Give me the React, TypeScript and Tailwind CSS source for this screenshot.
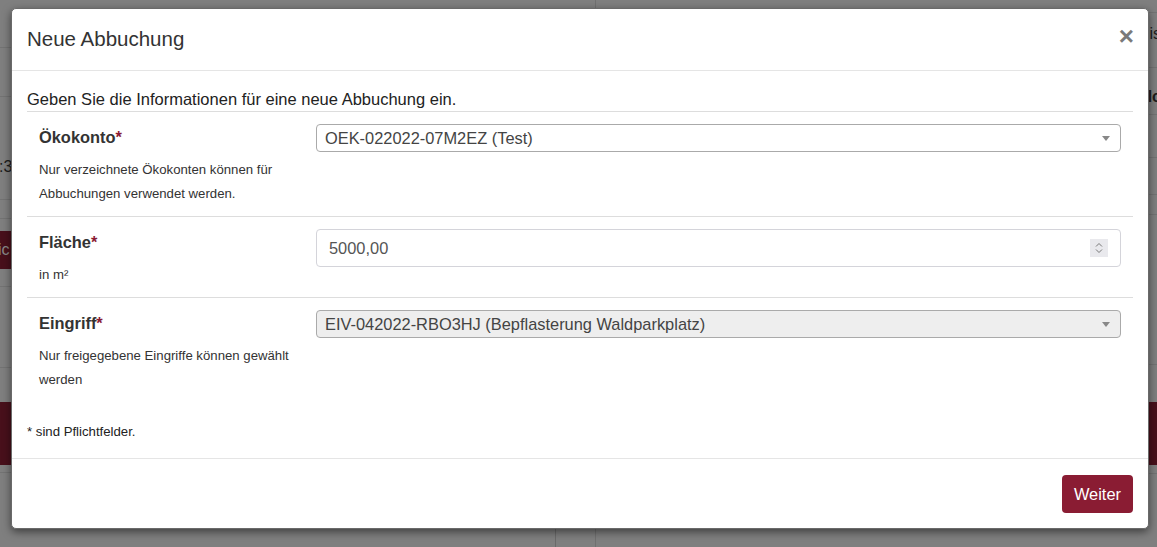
import React from "react";

function Caret() {
  return (
    <svg width="8" height="5" viewBox="0 0 8 5" className="shrink-0">
      <path d="M0 0 L8 0 L4 5 Z" fill="#888" />
    </svg>
  );
}

function Row({
  label,
  help,
  children,
  inputPad,
}: {
  label: string;
  help: React.ReactNode;
  children: React.ReactNode;
  inputPad: string;
}) {
  return (
    <div className="flex border-t border-[#dddddd]">
      <div className="w-[277px] shrink-0 px-[12px] pt-[13px] pb-[10px]">
        <div className="text-[16.4px] leading-[24px] font-bold text-[#333]">
          {label}
          <span className="text-[#8a1b34]">*</span>
        </div>
        <div className="mt-[9px] text-[13.2px] leading-[24px] text-[#333]">{help}</div>
      </div>
      <div className={"flex-1 px-[12px] " + inputPad}>{children}</div>
    </div>
  );
}

export default function App() {
  const font = { fontFamily: '"Liberation Sans", Arial, sans-serif' };
  return (
    <div className="relative w-[1157px] h-[547px] overflow-hidden bg-[#7f7f7f]" style={font}>
      {/* background page (dimmed) */}
      <div className="flex h-full">
        <div className="w-[596px] border-r border-[#707070] flex flex-col">
          <div className="h-[48px] border-b border-[#737373]" />
          <div className="h-[49px] border-b border-[#737373]" />
          <div className="h-[103px] border-b border-[#737373] flex items-end pb-[20px] text-[16px] text-[#1c1c1c]">
            <span className="-ml-[1px]">:3</span>
          </div>
          <div className="h-[19px] border-b border-[#737373]" />
          <div className="h-[68px] border-b border-[#737373] pt-[12px]">
            <div className="h-[38px] w-[120px] bg-[#48101b] text-[#8a8a8a] text-[16px] leading-[38px] -ml-[2px]">
              ic
            </div>
          </div>
          <div className="h-[81px] border-b border-[#737373]" />
          <div className="h-[34px]" />
          <div className="h-[63px] bg-[#48101b] w-[200px]" />
          <div className="h-[8px] border-b border-[#737373]" />
          <div className="flex-1 flex">
            <div className="w-[556px] border-r border-[#6a6a6a]" />
          </div>
        </div>
        <div className="flex-1 flex flex-col">
          <div className="h-[13px] border-b border-[#737373]" />
          <div className="h-[55px] border-b border-[#737373] flex items-start pt-[9px] justify-end text-[16px] text-[#1c1c1c]">
            <span className="-mr-[4px]">is</span>
          </div>
          <div className="h-[47px] border-b border-[#737373] flex items-start pt-[17px] justify-end text-[16px] font-bold text-[#1c1c1c]">
            <span className="-mr-[4px]">lc</span>
          </div>
          <div className="h-[43px] border-b border-[#737373]" />
          <div className="h-[37px] border-b border-[#737373]" />
          <div className="h-[20px] border-b border-[#737373]" />
          <div className="h-[150px] border-b border-[#737373]" />
          <div className="h-[37px]" />
          <div className="h-[63px] bg-[#48101b]" />
          <div className="h-[9px] border-b border-[#737373]" />
        </div>
      </div>

      {/* modal */}
      <div className="absolute left-[11px] top-[8px] w-[1138px] h-[521px] bg-white rounded-[5px] border border-[#6a6a6a] shadow-[0_3px_9px_rgba(0,0,0,0.5)] flex flex-col">
        <div className="h-[62px] border-b border-[#e5e5e5] flex items-center justify-between px-[15px]">
          <div className="text-[20.5px] leading-[30px] text-[#333] -mt-[2px]">Neue Abbuchung</div>
          <div className="text-[26px] leading-[26px] font-bold text-[#7a7a7a] -mr-[1px] -mt-[8px]">×</div>
        </div>
        <div className="px-[15px] pt-[16px] flex-1">
          <div className="text-[16.5px] leading-[24px] text-[#222]">
            Geben Sie die Informationen für eine neue Abbuchung ein.
          </div>
          <div className="w-[1106px]">
            <Row
              label="Ökokonto"
              inputPad="pt-[13px]"
              help={
                <>
                  Nur verzeichnete Ökokonten können für
                  <br />
                  Abbuchungen verwendet werden.
                </>
              }
            >
              <div className="h-[28px] border border-[#aaaaaa] rounded-[4px] flex items-center pl-[8px] pr-[10px] -mt-[1px]">
                <span className="flex-1 text-[16.4px] text-[#444]">OEK-022022-07M2EZ (Test)</span>
                <Caret />
              </div>
            </Row>
            <Row label="Fläche" help="in m²" inputPad="pt-[12px]">
              <div className="h-[38px] border border-[#d4d4da] rounded-[4px] flex items-center pl-[12px] pr-[12px]">
                <span className="flex-1 text-[16.4px] text-[#555]">5000,00</span>
                <div className="w-[18px] h-[18px] bg-[#e9e9ed] flex flex-col items-center justify-center gap-[2px]">
                  <svg width="8" height="5" viewBox="0 0 8 5">
                    <path d="M1 4.5 L4 1.5 L7 4.5" stroke="#777" strokeWidth="1" fill="none" />
                  </svg>
                  <svg width="8" height="5" viewBox="0 0 8 5">
                    <path d="M1 0.5 L4 3.5 L7 0.5" stroke="#777" strokeWidth="1" fill="none" />
                  </svg>
                </div>
              </div>
            </Row>
            <Row
              label="Eingriff"
              inputPad="pt-[13px]"
              help={
                <>
                  Nur freigegebene Eingriffe können gewählt
                  <br />
                  werden
                </>
              }
            >
              <div className="h-[28px] border border-[#aaaaaa] rounded-[4px] bg-[#eeeeee] flex items-center pl-[8px] pr-[10px] -mt-[1px]">
                <span className="flex-1 text-[16.4px] text-[#444]">
                  EIV-042022-RBO3HJ (Bepflasterung Waldparkplatz)
                </span>
                <Caret />
              </div>
            </Row>
          </div>
          <div className="mt-[20px] text-[13.2px] leading-[20px] text-[#222]">* sind Pflichtfelder.</div>
        </div>
        <div className="border-t border-[#e5e5e5] h-[70px] flex items-start pt-[16px] justify-end px-[15px]">
          <div className="h-[38px] px-[12px] rounded-[4px] bg-[#8a1c33] text-white text-[16.4px] flex items-center">
            Weiter
          </div>
        </div>
      </div>
    </div>
  );
}
